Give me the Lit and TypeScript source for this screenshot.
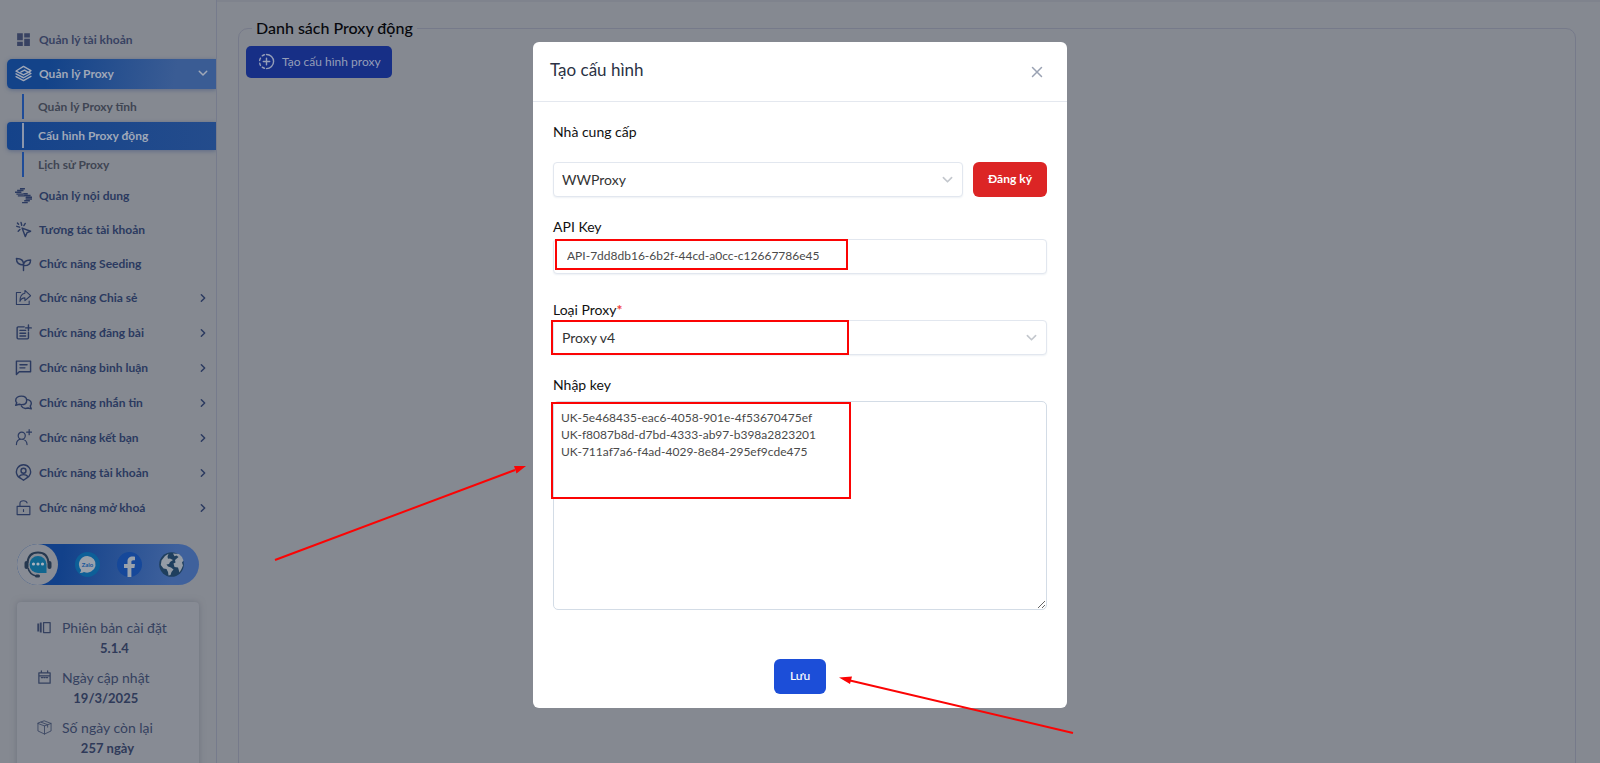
import { LitElement, html, css, svg, nothing } from "lit";
import { customElement } from "lit/decorators.js";
import { classMap } from "lit/directives/class-map.js";

const icons = {
  dashboard: svg`<path fill="currentColor" stroke="none" d="M3 3h8v10H3zM13 3h8v6h-8zM13 11h8v10h-8zM3 15h8v6H3z"/>`,
  layers: svg`<path d="M12 2 1.500 8.500 12 14l7-3.700-5.500-3L8.500 9.800M1.500 12.500 12 18l10.500-6-3.500-2M1.500 16.500 12 22l10.500-6M12 2l10.500 6-3.500 2.300"/>`,
  content: svg`<g fill="currentColor" stroke="none"><path d="M7 1.500h7v2H7zM3 4h9v2H3zM0 6.500h9v2H0zM2 9h10v2H2zM4 11.500h10v2H4zM12 8.500h6v2h-6zM13 11h9v2h-9zM15 13.500h9v2h-9zM15 16h9v2h-9zM13 18.500h8v2h-8zM10 21h8v2h-8z"/></g>`,
  click: svg`<path d="m10 10 12 4.500-5 2-2.500 5.500zM8.500 2l1 4M2.500 7.500l4 1.200M14.500 3.500 12.500 6.500M4.500 14.500l2.500-2.500M3.500 3l1.500 1.500"/>`,
  seed: svg`<path d="M12 22v-9c0-5-3-8-10-8 0 6 3 9 10 9M12 15c0-5 3-8 10-8 0 5-3 8-8.500 8"/>`,
  share: svg`<path d="M8 5H2v17h18v-5M14 6V2l8 7.500-8 7v-4c-4 0-6 2-7 5 0-6 2-11 7-11.500z" stroke-width="1.500"/>`,
  post: svg`<path d="M13 4H4.500a1.500 1.500 0 0 0-1.500 1.500v14A1.500 1.500 0 0 0 4.500 21h13a1.500 1.500 0 0 0 1.500-1.500V12M7 9h8M7 13h8M7 17h8M19 1.500v8M15 5.500h8"/>`,
  comment: svg`<path d="M2 3h20v15H6l-4 4zM7 8h10M7 12.500h7"/>`,
  chats: svg`<path d="M9 3c4.500 0 7.500 2.500 7.500 6s-3 6-7.500 6c-1.200 0-2.200-.2-3-.5L1 16l1.500-3.500C1.500 11.500 1 10.300 1 9c0-3.500 3.500-6 8-6zM18 8c3 .8 5 2.700 5 5.500 0 1.300-.5 2.500-1.500 3.500L23 21l-4.500-1.200c-4 1.200-8 .2-9.500-2.800"/>`,
  friend: svg`<path d="M2 22c0-4.500 2.500-7.500 7-7.500s8 3 8 7.500M9.500 14.500a5 5 0 1 0 0-10 5 5 0 0 0 0 10zM20 1v7M16.500 4.500h7" stroke-width="1.700"/>`,
  account: svg`<path d="M12 23 8.500 20.500A10 10 0 1 1 15.500 20.500zM12 13a3.500 3.500 0 1 0 0-7 3.500 3.500 0 0 0 0 7zM5.500 18c1.500-2 4-3 6.500-3s5 1 6.500 3"/>`,
  unlock: svg`<path d="M3 10.500h18V22H3zM7 10.500V6.500C7 4 9 2.500 12 2.500c2.500 0 4.500 1 5 3M12 15v2.500" stroke-width="1.600"/>`,
  version: svg`<path d="M10.500 4H21v16H10.500z"/><path fill="currentColor" stroke="none" d="M4.500 4h3v16h-3zM.5 5.500h3v13h-3z"/>`,
  calendar: svg`<path d="M3 4.500h18V21H3zM3 9.500h18M7 1.500v3M17 1.500v3M7 12h2M11 12h2M15 12h2"/>`,
  box: svg`<path d="m12 1.500 10.500 4v12L12 22.500l-10.500-5v-12zM1.500 5.500 12 9.500l10.500-4M12 9.500v13M6.500 3.500 17 7.500v4" stroke-width="1.300"/>`,
  plus: svg`<path d="M12 2a10 10 0 0 1 0 20M9 21.500a10 10 0 0 1-3-1.500M3.500 17.500a10 10 0 0 1-1-3M2.300 10.500a10 10 0 0 1 1.200-3.200M6 4a10 10 0 0 1 3-1.500M12 7.500v9M7.500 12h9"/>`,
  right: svg`<path d="m8 4 8 8-8 8" stroke-width="3.500"/>`,
  down: svg`<path d="m3 8 9 9 9-9" stroke-width="3.500"/>`,
  close: svg`<path d="m3 3 18 18M21 3 3 21" stroke-width="3"/>`,
};
type IconName = keyof typeof icons;

const icon = (name: IconName, cls = "icon") => html`<svg class=${cls} viewBox="0 0 24 24" fill="none"
  stroke="currentColor" stroke-width="2" stroke-linejoin="round" stroke-linecap="round" aria-hidden="true">${icons[name]}</svg>`;

interface Entry { label: string; icon: IconName; more?: boolean; muted?: boolean; children?: { label: string; current?: boolean }[] }

const entries: Entry[] = [
  { label: "Quản lý tài khoản", icon: "dashboard", muted: true },
  {
    label: "Quản lý Proxy", icon: "layers",
    children: [{ label: "Quản lý Proxy tĩnh" }, { label: "Cấu hình Proxy động", current: true }, { label: "Lịch sử Proxy" }],
  },
  { label: "Quản lý nội dung", icon: "content" },
  { label: "Tương tác tài khoản", icon: "click" },
  { label: "Chức năng Seeding", icon: "seed" },
  { label: "Chức năng Chia sẻ", icon: "share", more: true },
  { label: "Chức năng đăng bài", icon: "post", more: true },
  { label: "Chức năng bình luận", icon: "comment", more: true },
  { label: "Chức năng nhắn tin", icon: "chats", more: true },
  { label: "Chức năng kết bạn", icon: "friend", more: true },
  { label: "Chức năng tài khoản", icon: "account", more: true },
  { label: "Chức năng mở khoá", icon: "unlock", more: true },
];

const facts: { icon: IconName; label: string; value: string }[] = [
  { icon: "version", label: "Phiên bản cài đặt", value: "5.1.4" },
  { icon: "calendar", label: "Ngày cập nhật", value: "19/3/2025" },
  { icon: "box", label: "Số ngày còn lại", value: "257 ngày" },
];

const userKeys = [
  "UK-5e468435-eac6-4058-901e-4f53670475ef",
  "UK-f8087b8d-d7bd-4333-ab97-b398a2823201",
  "UK-711af7a6-f4ad-4029-8e84-295ef9cde475",
].join("\n");

@customElement("side-bar")
export class SideBar extends LitElement {
  static styles = css`
    :host { display: block; box-sizing: border-box; width: 217px; flex: none; padding-top: 25px; border-right: 1px solid #767b8c; overflow: hidden; }
    ul { list-style: none; margin: 0; padding: 0; }
    a { box-sizing: border-box; color: inherit; text-decoration: none; }
    .menu { padding-left: 7px; color: #2b3a60; font-size: 12px; font-weight: 700; }
    .entry { margin-bottom: 4px; }
    .entry.open { margin-bottom: 2px; }
    .link { display: flex; align-items: center; gap: 7px; height: 30px; padding: 0 8px 2px; }
    .link.more { height: 31px; }
    .link.muted { color: #384262; }
    .link.active { color: #a0a8b8; border-radius: 5px 0 0 5px; background: linear-gradient(100deg, #134389 20%, #3a5c94 80%); box-shadow: 0 1px 4px #5c6a86; }
    .text { flex: 1; }
    .icon { width: 17px; height: 17px; flex: none; }
    .chevron { width: 10px; height: 10px; flex: none; }
    .sub { display: grid; gap: 1px; margin-top: 4px; color: #3f4553; }
    .child { display: flex; align-items: center; gap: 14px; height: 28px; padding: 0 0 2px 15px; }
    .child::before { content: ""; width: 2px; height: 25px; background: #1f4c98; }
    .child.current { color: #a0a8b8; border-radius: 4px 0 0 4px; background: linear-gradient(90deg, #15438a, #244c8c); box-shadow: 0 1px 4px #5c6a86; }
    .child.current::before { background: #8b96ac; }
    .contact { display: flex; align-items: center; justify-content: space-between; height: 41px; margin: 20px 17px 17px; padding-right: 15px; border-radius: 21px; background: linear-gradient(100deg, #12418a 25%, #3f619c 85%); }
    .contact a { display: flex; }
    .round { width: 25px; height: 25px; }
    .chat { width: 41px; height: 41px; border-radius: 50%; background: #888c95; align-items: center; justify-content: center; }
    .chat svg { width: 28px; height: 28px; }
    .zalo { font: 700 6px Lato, sans-serif; }
    .facts { display: grid; justify-items: start; gap: 8px; margin: 0 17px; padding: 15px 20px 30px; border-radius: 4px; color: #35415f; font-size: 14px; line-height: 21px; box-shadow: 0 0 6px #6e727d; background: #878b94; }
    .fact { display: flex; gap: 10px; }
    .fact .icon { width: 15px; height: 15px; margin-top: 3px; }
    .pair { margin: 0; text-align: center; }
    .pair dd { margin: 0; font-size: 13px; font-weight: 700; color: #2f3a59; }
  `;

  private entry(e: Entry) {
    const open = !!e.children;
    return html`<li class=${classMap({ entry: true, open })}>
      <a href="#" class=${classMap({ link: true, active: open, more: !!e.more, muted: !!e.muted })}>
        ${icon(e.icon)}<span class="text">${e.label}</span>${open ? icon("down", "chevron") : e.more ? icon("right", "chevron") : nothing}
      </a>
      ${open ? html`<ul class="sub">${e.children!.map((c) => html`<li><a href="#" class=${classMap({ child: true, current: !!c.current })}>${c.label}</a></li>`)}</ul>` : nothing}
    </li>`;
  }

  render() {
    return html`
      <nav aria-label="Menu"><ul class="menu">${entries.map((e) => this.entry(e))}</ul></nav>
      <div class="contact">
        <a href="#" class="chat" aria-label="Chat"><svg viewBox="0 0 28 28" fill="none">
          <path d="M3.500 12C4 5 8 1.500 14 1.500S24 5 24.500 12" stroke="#26384f" stroke-width="2"/>
          <path d="M4 17c1 4 4 7 8 8" stroke="#26384f" stroke-width="1.500"/>
          <rect x=".5" y="10" width="4" height="8" rx="2" fill="#26384f"/><rect x="23.500" y="10" width="4" height="8" rx="2" fill="#26384f"/>
          <rect x="11" y="23.500" width="5" height="3" rx="1.500" fill="#26384f"/>
          <path d="M14 5a8.500 8.500 0 1 0 0 17h8.500v-8.500A8.500 8.500 0 0 0 14 5z" fill="#11668f"/>
          <g fill="#a9b3bf"><circle cx="9.500" cy="13" r="1.600"/><circle cx="14" cy="13" r="1.600"/><circle cx="18.500" cy="13" r="1.600"/></g>
        </svg></a>
        <a href="#" aria-label="Zalo"><svg class="round" viewBox="0 0 25 25">
          <circle cx="12.500" cy="12.500" r="12.500" fill="#0d5f98"/>
          <path d="M12.500 4a8.500 8.300 0 0 0-6.500 13.700c0 1.300-.3 2.300-1.300 3.300 1.700.1 3.200-.3 4.300-1A8.500 8.300 0 1 0 12.500 4z" fill="#99a1ab"/>
          <text class="zalo" x="12.500" y="15" text-anchor="middle" fill="#16559a">Zalo</text>
        </svg></a>
        <a href="#" aria-label="Facebook"><svg class="round" viewBox="0 0 25 25">
          <circle cx="12.500" cy="12.500" r="12.500" fill="#16489a"/>
          <path d="M10.500 25v-9H7v-4h3.500V9.500c0-3.500 2-5 5-5 1 0 2 .1 2.500.2v3.500h-1.700c-1.500 0-1.900.7-1.900 1.800v2H18l-.6 4h-3v9z" fill="#99a1ab"/>
        </svg></a>
        <a href="#" aria-label="Website"><svg class="round" viewBox="0 0 25 25">
          <circle cx="12.500" cy="12.500" r="12.300" fill="#1f3f5e"/>
          <path d="M9.500 1.800 6 4 2.500 8.500 1.800 13l2.700 3.500 3 .5 1.500 3 .5 3.500 2-.5 1-3 2-2.500-2.500-2-3-1-1.500-2 2.500-.5 1-2 3-2L11 6.500l-2 .3-.5-2zM14 1.500l1.500 2.800 2-.8 2 1.500-3.500 3 .5 2.500-2 1 1 3.500 3.500.5 1.500 5 2-3.500 1.500-3.500-1-3 1.500-2-1.500-3.500-3-3z" fill="#949ca6"/>
        </svg></a>
      </div>
      <div class="facts">${facts.map((f) => html`<div class="fact">${icon(f.icon)}<dl class="pair"><dt>${f.label}</dt><dd>${f.value}</dd></dl></div>`)}</div>`;
  }
}

@customElement("config-dialog")
export class ConfigDialog extends LitElement {
  static styles = css`
    :host { position: fixed; inset: 0; display: flex; justify-content: center; align-items: flex-start; padding: 42px 16px 16px; }
    * { box-sizing: border-box; }
    button, input, select, textarea { font-family: inherit; outline: none; }
    .dialog { position: relative; width: 100%; max-width: 534px; background: #fff; border-radius: 6px; color: #1b1b1f; }
    .head { display: flex; align-items: center; justify-content: space-between; height: 60px; padding: 0 22px 4px 17px; border-bottom: 1px solid #e4e8ef; }
    h2 { margin: 0; font-size: 17px; font-weight: 400; line-height: 24px; color: #2b3245; }
    .close { display: flex; padding: 2px; margin-top: 4px; border: 0; background: none; color: #9aa2b3; }
    .close svg { width: 12px; height: 12px; }
    .body { display: flex; flex-direction: column; padding: 20px 20px 14px; }
    label { font-size: 14px; line-height: 20px; color: #111; }
    .star { color: #f03a3a; font-weight: 700; }
    .row { display: flex; gap: 10px; margin: 20px 0; }
    .select { display: grid; flex: 1; align-items: center; }
    .select > * { grid-area: 1 / 1; }
    .select svg { width: 11px; height: 11px; justify-self: end; margin-right: 10px; color: #c3c7cd; pointer-events: none; }
    select, input { width: 100%; height: 35px; padding: 0 13px 2px; border: 1px solid #e2e7ef; border-radius: 4px; background: #fff; box-shadow: 0 1px 2px #eef1f5; }
    select { appearance: none; padding: 0 8px 1px; font-size: 14px; color: #333; }
    input { font-size: 12px; color: #4a4a4a; }
    .api { margin: 2px 0 26px; }
    .type { margin-bottom: 20px; }
    textarea { height: 209px; margin: 6px 0 49px; padding: 7px; border: 1px solid #d3dce6; border-radius: 5px; font-size: 12px; line-height: 17px; color: #4a4a4a; resize: both; }
    .btn { height: 35px; padding: 0 15px 2px; border: 0; border-radius: 6px; color: #fff; font-size: 12px; font-weight: 500; }
    .register { min-width: 74px; background: #dc2525; font-weight: 700; }
    .save { align-self: center; min-width: 52px; background: #1c4ed8; }
    .marks { position: absolute; left: 0; top: 0; width: 1px; height: 1px; overflow: visible; pointer-events: none; }
  `;

  render() {
    return html`<div class="dialog" role="dialog" aria-labelledby="title">
      <header class="head"><h2 id="title">Tạo cấu hình</h2><button class="close" aria-label="Đóng">${icon("close")}</button></header>
      <form class="body">
        <label for="provider">Nhà cung cấp</label>
        <div class="row">
          <div class="select"><select id="provider"><option>WWProxy</option></select>${icon("down")}</div>
          <button type="button" class="btn register">Đăng ký</button>
        </div>
        <label for="api">API Key</label>
        <input id="api" class="api" type="text" .value=${"API-7dd8db16-6b2f-44cd-a0cc-c12667786e45"} />
        <label for="type">Loại Proxy<span class="star">*</span></label>
        <div class="select type"><select id="type"><option>Proxy v4</option></select>${icon("down")}</div>
        <label for="keys">Nhập key</label>
        <textarea id="keys" .value=${userKeys}></textarea>
        <button type="button" class="btn save">Lưu</button>
      </form>
      <svg class="marks" fill="none" stroke="#fb0404" stroke-width="2" aria-hidden="true">
        <rect x="23" y="198" width="291" height="29"/>
        <rect x="19" y="279" width="296" height="33"/>
        <rect x="19" y="361" width="298" height="95"/>
        <path d="M-258 518-18 428M540 691 317 638.500"/>
        <g fill="#fb0404" stroke="none"><path d="M-7 424-19 424l2.500 7.500zM306 635.500l13-1-2 7.500z"/></g>
      </svg>
    </div>`;
  }
}

@customElement("app-root")
export class AppRoot extends LitElement {
  static styles = css`
    :host { display: flex; height: 100vh; overflow: hidden; background: #858991; font-family: Lato, sans-serif; }
    main { flex: 1; display: flex; border-top: 2px solid #7f838d; padding: 16px 24px 0 21px; }
    fieldset { flex: 1; min-width: 0; height: 100vh; margin: 0; padding: 8px 7px; border: 1px solid #767a8a; border-radius: 10px; }
    legend { margin-left: 6px; padding: 0 4px; font-size: 16px; font-weight: 500; line-height: 20px; color: #07080d; }
    .create { display: flex; align-items: center; gap: 7px; height: 32px; padding: 0 11px 1px 12px; border: 0; border-radius: 5px; background: #172f86; color: #959eb8; font: 400 12px Lato, sans-serif; }
    .create svg { width: 17px; height: 17px; }
  `;

  render() {
    return html`<side-bar></side-bar>
      <main><fieldset><legend>Danh sách Proxy động</legend><button class="create">${icon("plus")}Tạo cấu hình proxy</button></fieldset></main>
      <config-dialog></config-dialog>`;
  }
}
